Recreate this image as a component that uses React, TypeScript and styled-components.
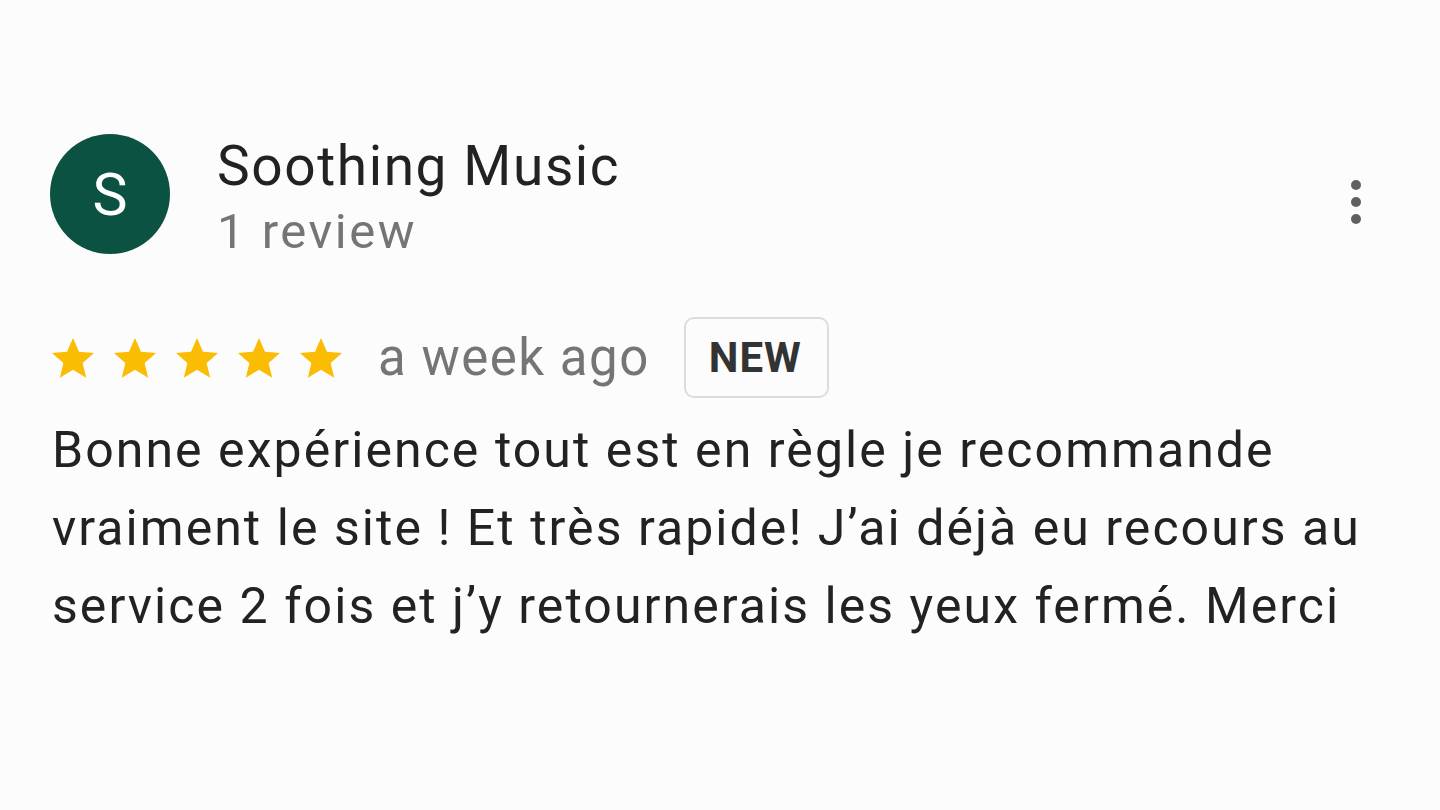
import * as React from "react";
import styled, { createGlobalStyle } from "styled-components";

const GlobalStyle = createGlobalStyle`
  html, body {
    margin: 0;
    padding: 0;
    background: #fcfcfc;
  }
  body {
    font-family: Roboto, "Noto Sans", Arial, sans-serif;
  }
`;

const Page = styled.div`
  width: 1440px;
  height: 810px;
  box-sizing: border-box;
  padding: 133px 0 0 50px;
  background: #fcfcfc;
`;

const Header = styled.div`
  display: flex;
  align-items: flex-start;
  width: 1318px;
`;

const Avatar = styled.div`
  width: 120px;
  height: 120px;
  margin-top: 1px;
  border-radius: 50%;
  background: #0b5242;
  color: #ffffff;
  display: flex;
  align-items: center;
  justify-content: center;
  font-size: 59px;
  flex-shrink: 0;
`;

const Author = styled.div`
  display: flex;
  flex-direction: column;
  margin-left: 47px;
  flex: 1;
`;

const Name = styled.div`
  font-size: 55px;
  line-height: 66px;
  letter-spacing: 1.6px;
  color: #222222;
`;

const Count = styled.div`
  font-size: 49px;
  line-height: 66px;
  letter-spacing: 2.5px;
  color: #757575;
`;

const MoreButton = styled.button`
  border: none;
  background: none;
  padding: 0;
  width: 24px;
  height: 60px;
  margin-top: 39px;
  display: flex;
  flex-direction: column;
  align-items: center;
  justify-content: center;
  gap: 7px;
`;

const Dot = styled.span`
  width: 10px;
  height: 10px;
  border-radius: 50%;
  background: #606060;
`;

const Meta = styled.div`
  display: flex;
  align-items: center;
  margin-top: 52px;
`;

const Stars = styled.div`
  display: flex;
  gap: 16px;
`;

const When = styled.span`
  font-size: 51px;
  letter-spacing: 1.5px;
  color: #757575;
  margin-left: 34px;
`;

const Badge = styled.span`
  margin-left: 34px;
  height: 81px;
  box-sizing: border-box;
  padding: 0 25px 0 23px;
  display: inline-flex;
  align-items: center;
  border: 2px solid #dcdcdc;
  border-radius: 10px;
  font-size: 42px;
  font-weight: 700;
  letter-spacing: 1px;
  color: #333333;
`;

const Body = styled.p`
  margin: 13px 0 0 2px;
  font-size: 50px;
  line-height: 78px;
  letter-spacing: 2.05px;
  color: #222222;
  width: 1330px;
`;

const Star: React.FC = () => (
  <svg width="46" height="46" viewBox="0 0 24 24">
    <path
      fill="#fbbc04"
      d="M12 1.5l3.1 7.3 7.9.6-6 5.2 1.9 7.7L12 18.1l-6.9 4.2 1.9-7.7-6-5.2 7.9-.6z"
    />
  </svg>
);

export default function App() {
  return (
    <>
      <GlobalStyle />
      <Page>
        <Header>
          <Avatar>S</Avatar>
          <Author>
            <Name>Soothing Music</Name>
            <Count>1 review</Count>
          </Author>
          <MoreButton aria-label="More">
            <Dot />
            <Dot />
            <Dot />
          </MoreButton>
        </Header>
        <Meta>
          <Stars>
            {[0, 1, 2, 3, 4].map((i) => (
              <Star key={i} />
            ))}
          </Stars>
          <When>a week ago</When>
          <Badge>NEW</Badge>
        </Meta>
        <Body>
          Bonne expérience tout est en règle je recommande vraiment le site ! Et très rapide! J’ai déjà eu recours au
          service 2 fois et j’y retournerais les yeux fermé. Merci
        </Body>
      </Page>
    </>
  );
}
